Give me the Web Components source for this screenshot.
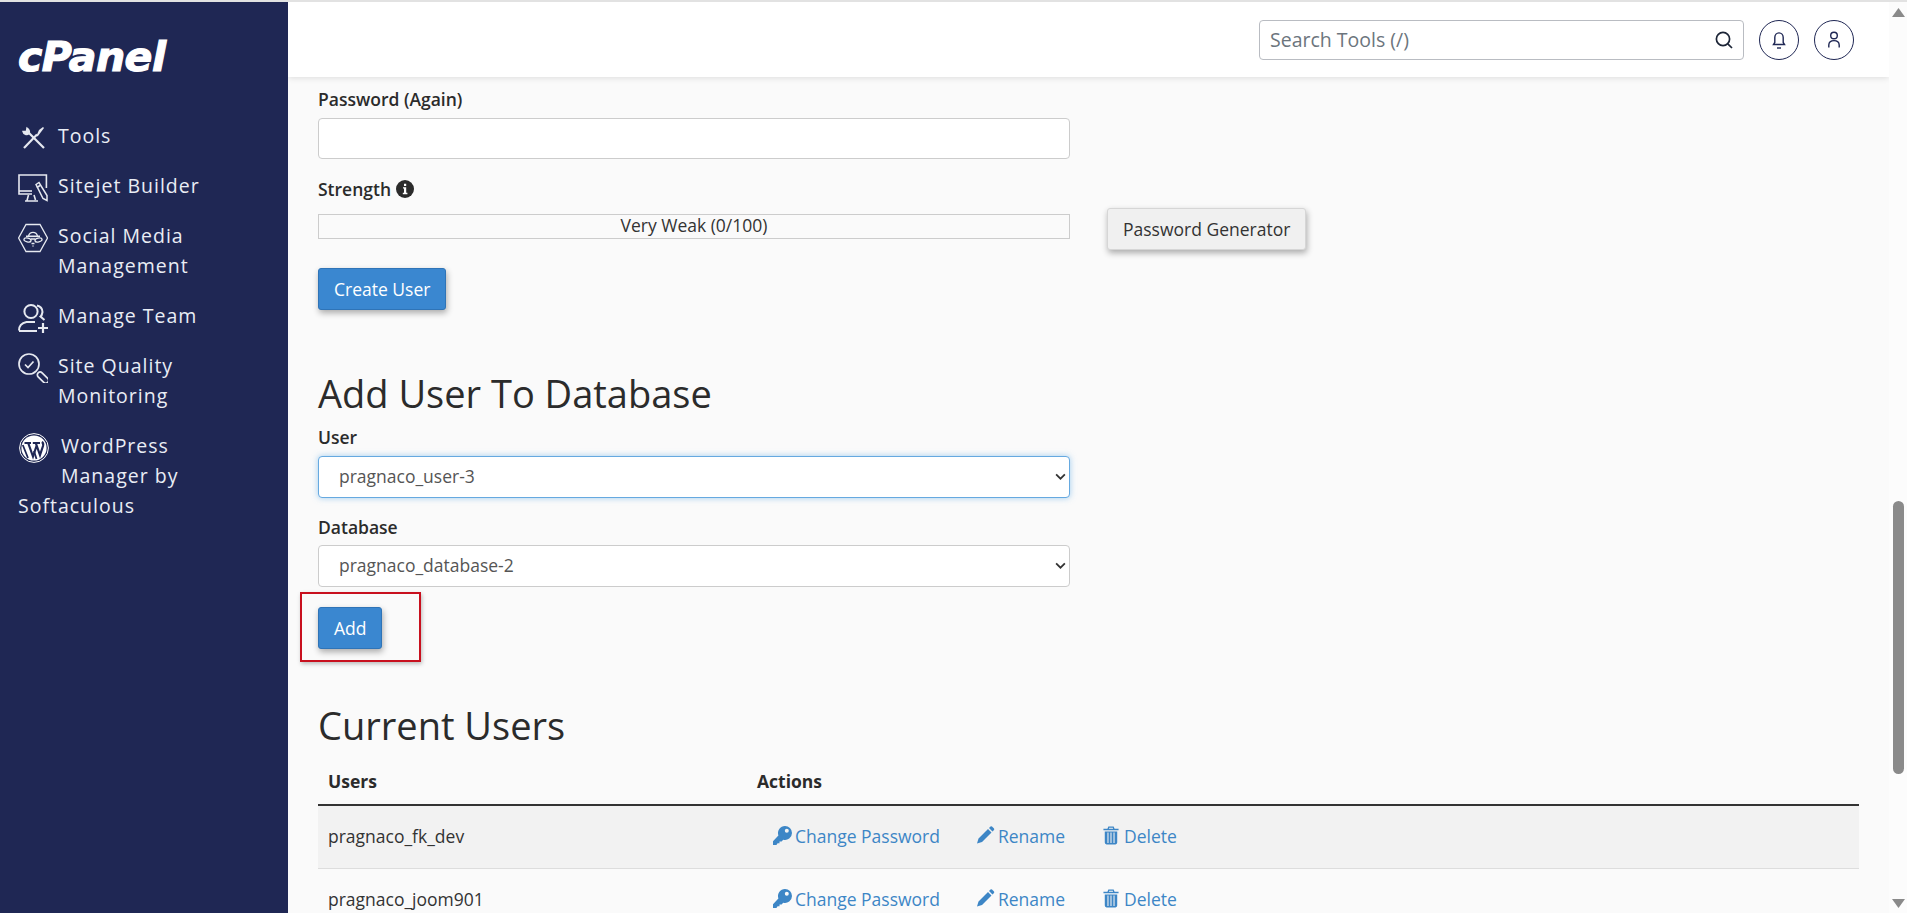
<!DOCTYPE html>
<html lang="en"><head><meta charset="utf-8"><title>MySQL Databases</title>
<style>
html,body{margin:0;height:100%;overflow:hidden;background:#fafafa;font-family:"Open Sans","Liberation Sans",sans-serif;color:#333;}
cp-app{height:100vh}
</style></head><body>
<cp-app>
  <cp-sidebar slot="side">
    <cp-nav-item icon="tools">Tools</cp-nav-item>
    <cp-nav-item icon="sitejet">Sitejet Builder</cp-nav-item>
    <cp-nav-item icon="social">Social Media Management</cp-nav-item>
    <cp-nav-item icon="team">Manage Team</cp-nav-item>
    <cp-nav-item icon="quality">Site Quality Monitoring</cp-nav-item>
    <cp-nav-item icon="wp">WordPress Manager by Softaculous</cp-nav-item>
  </cp-sidebar>
  <cp-topbar slot="top"></cp-topbar>
  <cp-section>
    <cp-field label="Password (Again)" style="--gap:7px"><cp-input></cp-input></cp-field>
    <cp-strength></cp-strength>
    <cp-button kind="primary" style="margin-top:18px">Create User</cp-button>
    <cp-heading style="margin-top:62px">Add User To Database</cp-heading>
    <cp-field label="User" style="margin-top:10px;--gap:7px"><cp-select value="pragnaco_user-3" focused></cp-select></cp-field>
    <cp-field label="Database" style="margin-top:17px"><cp-select value="pragnaco_database-2"></cp-select></cp-field>
    <cp-highlight style="margin-top:20px"><cp-button kind="primary">Add</cp-button></cp-highlight>
    <cp-heading style="margin-top:55px">Current Users</cp-heading>
    <cp-users></cp-users>
  </cp-section>
  <cp-scrollbar slot="bar"></cp-scrollbar>
</cp-app>
<script>
const ICONS={
tools:`<g fill="none" stroke="currentColor" stroke-width="2.2"><path d="M6 25 L19 11.5"/><path d="M26 25 L11 10"/><path d="M5 8.5 Q5.5 11 8 11.6 Q10.6 11.8 11.4 9.4 Q11.6 6.6 9 5 L8.4 8.4 L5 8.5Z" stroke-width="1.4" fill="currentColor"/></g><path d="M18.6 12.4 L21 7 L25 4 L26 5 L23 9 L19.6 13.4Z" fill="currentColor"/>`,
sitejet:`<g fill="none" stroke="currentColor" stroke-width="1.6"><path d="M21 2 H1 V21 H14"/><path d="M28.4 15 V2 H21"/><path d="M1 18 H14"/><path d="M7 28 H20 M10.5 22 L9 27.5 M16 22 L17.5 27"/><path d="M18 11.5 L21 9.5 L29 22.5 L29 27.5 L25 25.5 Z" stroke-width="1.5"/><path d="M18.8 14.5 L22 12.5"/></g>`,
social:`<g fill="none" stroke="currentColor" stroke-width="1.3"><path d="M8 1.5 H22 L29.5 15 L22 28.5 H8 L0.6 15Z"/><path d="M10.5 13 A4.7 5 0 0 1 19.5 13"/><path d="M8 13.3 H22" stroke-width="1.6"/><ellipse cx="9.5" cy="17" rx="3.6" ry="1.9" transform="rotate(12 9.5 17)"/><ellipse cx="20.5" cy="17" rx="3.6" ry="1.9" transform="rotate(-12 20.5 17)"/><path d="M13 16 H17 M13.5 20.5 H16.5 M14.5 23 H15.5"/></g>`,
team:`<g fill="none" stroke="currentColor" stroke-width="2"><circle cx="13" cy="8.5" r="6.6"/><path d="M19 2.4 A7 7 0 0 1 24.5 9 Q24 12.5 22.5 13.5 L26.5 17"/><path d="M1 27.5 Q1 20.5 8.5 19 H17"/><path d="M1 28 H19"/><path d="M25 20 V30 M20 25 H30" stroke-width="2.2"/></g>`,
quality:`<g fill="none" stroke="currentColor" stroke-width="1.7"><circle cx="11" cy="11" r="10"/><path d="M7 11.5 L10 14.5 L15.5 8.5"/><rect x="-2.6" y="0" width="5.6" height="13.5" rx="2.8" transform="translate(20 20) rotate(-45)"/></g>`,
wp:`<circle cx="15" cy="15" r="14.4" fill="none" stroke="currentColor" stroke-width="1"/><circle cx="15" cy="15" r="12.6" fill="currentColor"/><path d="M5.5 10 H12 M9 9.5 L14 23.5 L17.5 13 M13.8 10 H21 M16.6 9.5 L21 22 L24 13 Q24.8 10 22.8 9" fill="none" stroke="#1f2754" stroke-width="2.2"/><path d="M3.8 12 L9 25 M15 18 L17.5 26" stroke="#1f2754" stroke-width="1.8" fill="none"/>`
};
const def=(name,build,css)=>{customElements.define(name,class extends HTMLElement{
  connectedCallback(){ if(this.shadowRoot) return; const r=this.attachShadow({mode:'open'}); r.innerHTML=`<style>${css}</style>`+build(this); }
});};

def('cp-app',()=>`<div class="line"></div><div class="grid"><slot name="side"></slot><div class="main"><slot name="top"></slot><slot></slot></div><slot name="bar"></slot></div>`,
`:host{display:flex;flex-direction:column;overflow:hidden}
.line{height:2px;background:#e2e2e2;flex:none}
.grid{flex:1;min-height:0;display:grid;grid-template-columns:288px 1fr 18px}
.main{display:flex;flex-direction:column;min-width:0;overflow:hidden}`);

def('cp-sidebar',()=>`<div class="logo"><span>cPanel</span></div><nav><slot></slot></nav>`,
`:host{display:block;background:#1f2754;color:#e9edf5}
.logo{height:119px;box-sizing:border-box;padding:31px 0 0 18px;}
.logo span{display:inline-block;font:italic 700 41px/49px "DejaVu Sans",sans-serif;color:#fff;letter-spacing:-.5px;-webkit-text-stroke:1.2px #fff;}
nav{padding:0 14px 0 18px;display:flex;flex-direction:column;gap:20px}`);

def('cp-nav-item',h=>{const k=h.getAttribute('icon');return `<div class="i ${k}"><svg viewBox="0 0 30 30" width="30" height="30">${ICONS[k]}</svg><slot></slot></div>`},
`:host{display:block;font-size:19.5px;line-height:30px;letter-spacing:1px}
svg{float:left;margin:2px 10px 0 0;color:#e6e9f0;display:block}
.tools svg,.sitejet svg,.team svg{margin-bottom:-2px}
.wp{padding-right:40px}
.wp svg{margin:2px 12px 0 1px;color:#fff}`);

def('cp-topbar',()=>`<label class="search"><span>Search Tools (/)</span><svg viewBox="0 0 18 18" width="18" height="18" fill="none" stroke="#1b2436" stroke-width="1.7"><circle cx="8" cy="8" r="6.6"/><path d="M12.8 12.8 L17 17"/></svg></label>
<div class="c"><svg viewBox="0 0 20 20" width="20" height="20" fill="none" stroke="#1f2754" stroke-width="1.4"><path d="M4.5 14.5 H15.5 L14.2 12.5 V7.5 A4.2 4.6 0 0 0 5.8 7.5 V12.5Z"/><path d="M8 18 H12"/></svg></div>
<div class="c"><svg viewBox="0 0 20 20" width="20" height="20" fill="none" stroke="#1f2754" stroke-width="1.4"><circle cx="10" cy="5.5" r="3.3"/><path d="M4.8 17.5 V15 Q5 10.6 10 10.6 Q15 10.6 15.2 15 V17.5"/></svg></div>`,
`:host{display:flex;flex:none;align-items:center;height:75px;box-sizing:border-box;padding:0 35px 0 0;justify-content:flex-end;gap:15px;background:#fff;box-shadow:0 1px 6px rgba(0,0,0,.12);position:relative;z-index:2}
.search{flex:none;width:485px;height:40px;box-sizing:border-box;border:1px solid #b9bcc2;border-radius:4px;display:flex;align-items:center;justify-content:space-between;padding:0 10px 0 10px;font-size:19.5px;color:#6c757d;background:#fff}
.c{width:40px;height:40px;box-sizing:border-box;border:1px solid #1f2754;border-radius:50%;display:flex;align-items:center;justify-content:center}`);

def('cp-section',()=>`<slot></slot>`,`:host{display:block;flex:1;padding:10px 30px 0;background:#fafafa;overflow:hidden;font-size:17.5px;line-height:24px;color:#333}`);

def('cp-field',h=>`<div class="l">${h.getAttribute('label')}</div><slot></slot>`,
`:host{display:block;width:752px}.l{font-weight:600;line-height:24px;margin-bottom:var(--gap,6px);color:#2b2b2b}`);

def('cp-input',()=>`<input type="text" aria-label="Password again">`,
`:host{display:block}input{display:block;width:100%;height:41px;box-sizing:border-box;border:1px solid #ccc;border-radius:4px;background:#fff;padding:0 12px;outline:none}`);

def('cp-select',h=>`<select aria-label="choice" class="${h.hasAttribute('focused')?'f':''}"><option>${h.getAttribute('value')}</option></select><svg viewBox="0 0 12 8" width="11" height="7" fill="none" stroke="#333" stroke-width="2"><path d="M1 1.5 L6 6.5 L11 1.5"/></svg>`,
`:host{display:block;position:relative}
select{display:block;appearance:none;-webkit-appearance:none;width:100%;height:42px;box-sizing:border-box;border:1px solid #ccc;border-radius:4px;background:#fff;padding:0 20px 2px;font:17.5px "Open Sans",sans-serif;color:#555;outline:none}
select.f{border-color:#66a9e0;box-shadow:0 0 6px rgba(102,175,233,.6)}
svg{position:absolute;right:4px;top:17px}`);

def('cp-button',h=>`<button class="${h.getAttribute('kind')||''}"><slot></slot></button>`,
`:host{display:block;width:max-content}
button{display:block;height:42px;box-sizing:border-box;padding:0 15px 1px;border-radius:3px;font:17.5px "Open Sans",sans-serif;cursor:pointer;border:1px solid #d6d6d6;background:#f0f0f0;color:#333;box-shadow:1px 3px 6px rgba(0,0,0,.32)}
button.primary{background:#3a87d0;border-color:#2f74b7;color:#fff}`);

def('cp-strength',()=>`<div class="l">Strength <svg viewBox="0 0 18 18" width="18" height="18"><circle cx="9" cy="9" r="9" fill="#2b2b2b"/><path d="M7 7.2 H10.2 V12.8 H11.4 V14.2 H6.8 V12.8 H8 V8.6 H7Z M8 3.8 H10.2 V6 H8Z" fill="#fff"/></svg></div>
<div class="row"><div class="bar">Very Weak (0/100)</div><cp-button>Password Generator</cp-button></div>`,
`:host{display:block;margin-top:18px}
.l{font-weight:600;line-height:24px;color:#2b2b2b;display:flex;align-items:center;gap:5px}
.row{display:flex;align-items:flex-start;margin-top:7px;gap:37px}
.bar{flex:none;width:752px;height:25px;box-sizing:border-box;margin-top:6px;border:1px solid #ccc;background:#fafafa;text-align:center;line-height:21px;color:#333}
`);

def('cp-heading',()=>`<h2><slot></slot></h2>`,
`:host{display:block}h2{margin:0;font:400 38px/43px "Open Sans",sans-serif;color:#2b2b2b}`);

def('cp-highlight',()=>`<slot></slot><i></i>`,
`:host{display:block;position:relative;width:max-content}
i{position:absolute;left:-18px;top:-15px;width:121px;height:70px;box-sizing:border-box;border:2px solid #c8101e;box-shadow:1px 2px 4px rgba(0,0,0,.25)}`);

const KEY=`<svg viewBox="0 0 19 19" width="19" height="19"><path fill-rule="evenodd" fill="currentColor" d="M12 0 A7 7 0 0 1 19 7 A7 7 0 0 1 10.2 13.7 L8.6 15.4 H6.5 V17.2 H4.6 L3.4 19 H0 V15.2 L5.4 9.4 A7 7 0 0 1 12 0Z M13.8 2.8 A2 2 0 1 0 13.8 6.8 A2 2 0 1 0 13.8 2.8Z"/></svg>`;
const PEN=`<svg viewBox="0 0 18 18" width="19" height="18"><path fill="currentColor" d="M0.5 17.5 L2 12.5 L11.5 3 L15 6.5 L5.5 16Z M12.5 2 L14 0.5 Q14.7 0 15.5 0.5 L17.5 2.5 Q18 3.3 17.5 4 L16 5.5Z"/></svg>`;
const BIN=`<svg viewBox="0 0 18 21" width="16" height="19"><path fill="currentColor" d="M6 0.5 H12 L13 3 H17.5 V4.6 H0.5 V3 H5Z M7 1.8 L6.6 3 H11.4 L11 1.8Z M2 6 H16 V18.5 Q16 20.5 14 20.5 H4 Q2 20.5 2 18.5Z"/><path d="M5.6 7.2 V19 M9 7.2 V19 M12.4 7.2 V19" stroke="#f2f2f2" stroke-width="1.2"/></svg>`;
const row=(n,cls)=>`<div class="r ${cls}"><div class="u">${n}</div><div class="a"><a href="#">${KEY}<span>Change Password</span></a><a href="#">${PEN}<span>Rename</span></a><a href="#">${BIN}<span>Delete</span></a></div></div>`;
def('cp-users',()=>`<div class="h"><div>Users</div><div>Actions</div></div>${row('pragnaco_fk_dev','odd')}${row('pragnaco_joom901','')}`,
`:host{display:block;margin-top:10px}
.h{display:grid;grid-template-columns:429px 1fr;padding-left:10px;height:47px;line-height:49px;font-weight:700;color:#2b2b2b;border-bottom:2px solid #333;box-sizing:content-box}
.r{display:grid;grid-template-columns:429px 1fr;padding:0 0 2px 10px;box-sizing:border-box;height:63px;align-items:center;border-bottom:1px solid #ddd}
.odd{background:#f2f2f2}
.u{color:#333}
.a{display:flex;padding-left:16px;align-items:center}
a{display:flex;align-items:center;color:#3d86c6;text-decoration:none;margin-right:36px;gap:3px}
a:nth-child(2){margin-right:38px}
a:nth-child(3){gap:5px}
svg{margin-top:-2px}`);

def('cp-scrollbar',()=>`<svg viewBox="0 0 13 9" width="13" height="9"><path d="M6.5 0 L13 9 H0Z" fill="#8a8a8a"/></svg><div class="t"></div><svg class="b" viewBox="0 0 13 9" width="13" height="9"><path d="M0 0 H13 L6.5 9Z" fill="#8a8a8a"/></svg>`,
`:host{display:flex;flex-direction:column;align-items:center;background:#fcfcfc;padding:6px 0 5px;box-sizing:border-box;height:911px}
.t{width:11px;height:273px;margin-top:484px;border-radius:6px;background:#8a8a8a}
.b{margin-top:auto}`);
</script>
</body></html>
